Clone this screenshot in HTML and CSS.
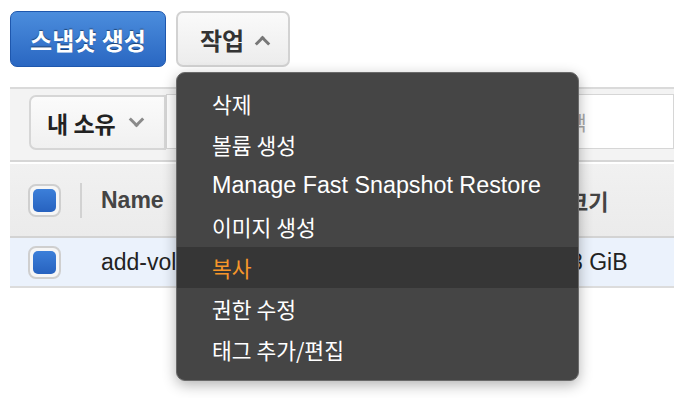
FILE: index.html
```html
<!DOCTYPE html>
<html>
  <head>
    <meta charset="UTF-8" />
    <title>스냅샷</title>
    <link rel="stylesheet" href="styles.css">
  </head>
  <body>
    <div class="page">
      <div class="actions">
        <button class="btn btn-primary">스냅샷 생성</button>
        <div class="menu-wrap">
          <button class="btn btn-default">작업 <span class="chev up"></span></button>
          <ul class="menu">
            <li>삭제</li>
            <li>볼륨 생성</li>
            <li class="latin">Manage Fast Snapshot Restore</li>
            <li>이미지 생성</li>
            <li class="active">복사</li>
            <li>권한 수정</li>
            <li>태그 추가/편집</li>
          </ul>
        </div>
      </div>

      <div class="toolbar">
        <button class="owner">내 소유 <span class="chev down"></span></button>
        <div class="search">태그 및 속성별 필터링 또는 키워드별 검색</div>
      </div>

      <div class="table">
        <div class="row head">
          <div class="cell check"><span class="box"><span></span></span></div>
          <div class="sep"></div>
          <div class="cell name">Name</div>
          <div class="cell size">크기</div>
        </div>
        <div class="row selected">
          <div class="cell check"><span class="box"><span></span></span></div>
          <div class="cell name">add-volume-snapshot</div>
          <div class="cell size">8 GiB</div>
        </div>
      </div>
    </div>
  </body>
</html>
```

FILE: styles.css
```css
* {
  --blue: #2f6fcc;
  --border: #cfcfcf;
  --menu: #454545;
  --orange: #f7962a;
  box-sizing: border-box;
}
body {
  margin: 0;
  padding: 0;
  background: #fff;
  font-family: "Liberation Sans", "Noto Sans CJK KR", sans-serif;
}
.page {
  padding: 11px 0 0 10px;
  min-height: 398px;
}
.actions {
  display: flex;
  gap: 10px;
  height: 56px;
}
.btn {
  height: 56px;
  border-radius: 7px;
  font-family: "Noto Sans CJK KR", sans-serif;
  font-weight: 700;
  font-size: 24px;
  display: flex;
  align-items: center;
  justify-content: center;
  margin: 0;
}
.btn-primary {
  width: 156px;
  padding: 0;
  color: #fff;
  background: linear-gradient(#4b8ddd, #2a67c2);
  border: 1px solid #1e57ad;
  text-shadow: 0 -1px 1px rgba(0, 0, 0, 0.45);
}
.btn-default {
  width: 114px;
  padding: 0 0 0 2px;
  color: #333;
  background: linear-gradient(#fafafa, #ececec);
  border: 2px solid #d2d2d2;
  gap: 13px;
}
.chev {
  display: inline-block;
  width: 11px;
  height: 11px;
  border-left: 3.5px solid #777;
  border-top: 3.5px solid #777;
}
.chev.up {
  transform: translateY(4px) rotate(45deg);
}
.chev.down {
  transform: translateY(-3px) rotate(225deg);
  border-color: #8a8a8a;
}
.menu-wrap {
  position: relative;
}
.menu {
  position: absolute;
  left: 0;
  top: 61px;
  width: 403px;
  margin: 0;
  padding: 10px 0;
  list-style: none;
  background: var(--menu);
  border: 1px solid #6a6a6a;
  border-radius: 9px;
  box-shadow: 0 4px 14px rgba(0, 0, 0, 0.3);
  z-index: 5;
}
.menu li {
  height: 41px;
  line-height: 41px;
  padding-left: 35px;
  color: #fff;
  font-family: "Noto Sans CJK KR", sans-serif;
  font-size: 21.5px;
  white-space: nowrap;
}
.menu li.latin {
  font-family: "Liberation Sans", sans-serif;
  font-size: 23.3px;
}
.menu li.active {
  background: #363636;
  color: var(--orange);
}
.toolbar {
  margin-top: 20px;
  height: 75px;
  display: flex;
  align-items: flex-start;
  padding: 6px 0 0 19px;
  background: #f3f3f3;
  border-top: 2px solid #dadada;
  border-bottom: 2px solid #d6d6d6;
}
.owner {
  width: 137px;
  height: 55px;
  margin: 0;
  display: flex;
  align-items: center;
  gap: 15px;
  padding: 0 0 0 16px;
  font-family: "Noto Sans CJK KR", sans-serif;
  font-weight: 700;
  font-size: 23px;
  color: #222;
  background: linear-gradient(#fbfbfb, #f0f0f0);
  border: 2px solid #d6d6d6;
  border-radius: 7px 0 0 7px;
}
.search {
  flex: 1;
  height: 55px;
  line-height: 55px;
  margin-top: -1px;
  background: #fff;
  border: 1px solid #d6d6d6;
  padding-left: 80px;
  font-family: "Noto Sans CJK KR", sans-serif;
  font-size: 20px;
  color: #a8a8a8;
  white-space: nowrap;
  overflow: hidden;
}
.table {
  margin-top: 2px;
}
.row {
  display: flex;
  align-items: center;
}
.row.head {
  height: 74px;
  background: linear-gradient(#f1f1f1, #ebebeb);
  border-bottom: 2px solid #d3d3d3;
}
.row.selected {
  height: 50px;
  background: #ebf2fc;
  border-bottom: 2px solid #dcdcdc;
}
.cell.check {
  width: 70px;
  padding-left: 18px;
  display: flex;
}
.box {
  width: 33px;
  height: 33px;
  border: 2px solid var(--border);
  border-radius: 8px;
  background: #f6f6f6;
  display: flex;
  align-items: center;
  justify-content: center;
}
.box span {
  width: 23px;
  height: 23px;
  border-radius: 5px;
  background: linear-gradient(#3c7fd9, #2762bf);
}
.sep {
  width: 2px;
  height: 35px;
  background: #d2d2d2;
  margin-right: 19px;
}
.cell.name {
  width: 490px;
  padding-left: 21px;
  font-size: 23px;
  color: #222;
  white-space: nowrap;
}
.head .cell.name {
  font-weight: 700;
  color: #444;
  width: 467px;
  padding-left: 0;
}
.cell.size {
  font-size: 23px;
  color: #222;
  white-space: nowrap;
}
.head .cell.size {
  font-family: "Noto Sans CJK KR", sans-serif;
  font-weight: 700;
  font-size: 22px;
  color: #444;
}
```
